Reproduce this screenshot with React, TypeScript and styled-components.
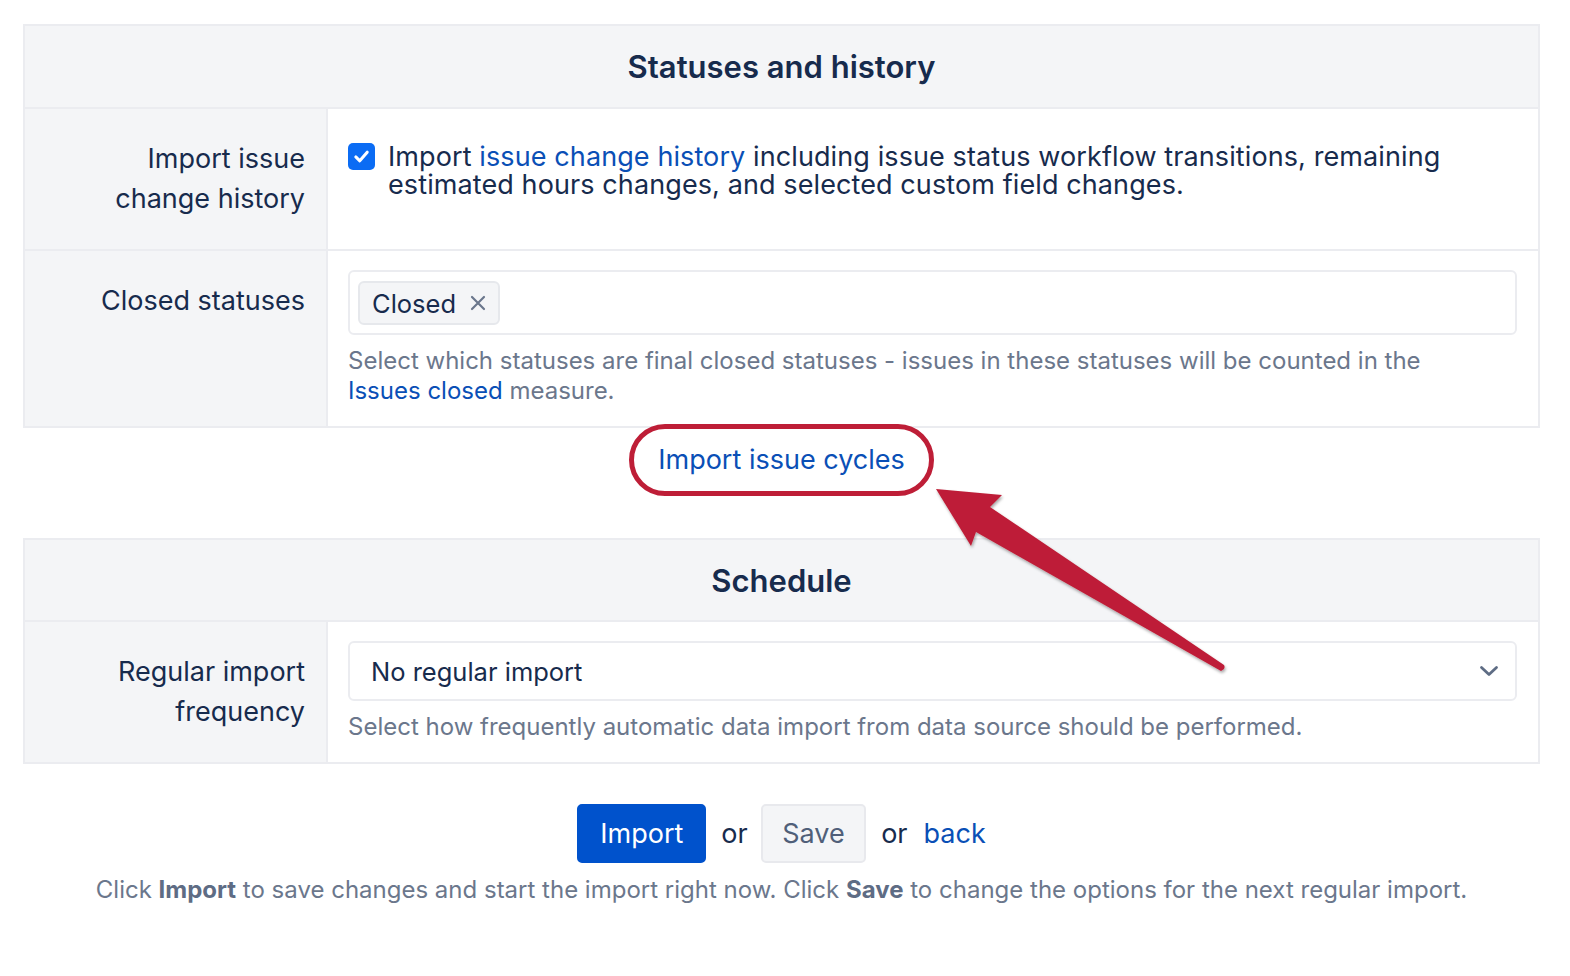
import React from "react";
import styled, { createGlobalStyle } from "styled-components";

const GlobalStyle = createGlobalStyle`
  html, body { margin: 0; padding: 0; background: #ffffff; }
  body {
    font-family: Inter, "Noto Sans", "Liberation Sans", sans-serif;
    color: #172b4d;
    -webkit-font-smoothing: antialiased;
  }
  * { box-sizing: border-box; }
`;

const Page = styled.div`
  position: relative;
  padding: 24px 30px 40px 23px;
  min-height: 976px;
`;

const Section = styled.section<{ $gap?: number }>`
  border: 2px solid #ebecf0;
  margin-top: ${(p) => p.$gap ?? 0}px;
  display: flex;
  flex-direction: column;
`;

const SectionHeader = styled.h2<{ $h?: number }>`
  margin: 0;
  height: ${(p) => p.$h ?? 81}px;
  display: flex;
  align-items: center;
  justify-content: center;
  background: #f4f5f7;
  font-size: 31px;
  font-weight: 600;
  color: #172b4d;
`;

const Row = styled.div`
  display: grid;
  grid-template-columns: 303px 1fr;
  border-top: 2px solid #ebecf0;
`;

const Label = styled.div`
  background: #f4f5f7;
  border-right: 2px solid #ebecf0;
  text-align: right;
  padding: 30px 21px 30px 20px;
  font-size: 27px;
  line-height: 40px;
  color: #172b4d;
`;

const Cell = styled.div<{ $top?: number }>`
  padding: ${(p) => p.$top ?? 19}px 21px 20px 20px;
  background: #ffffff;
`;

const CheckLine = styled.label`
  display: flex;
  align-items: flex-start;
  gap: 13px;
`;

const CheckBox = styled.span`
  flex: 0 0 27px;
  width: 27px;
  height: 27px;
  border-radius: 5px;
  background: #0b6cf4;
  display: flex;
  align-items: center;
  justify-content: center;
`;

const CheckText = styled.span`
  font-size: 27px;
  line-height: 28px;
  letter-spacing: 0.1px;
  color: #172b4d;
`;

const Link = styled.a<{ $nowrap?: boolean }>`
  color: #0a4fb6;
  text-decoration: none;
  white-space: ${(p) => (p.$nowrap ? "nowrap" : "normal")};
`;

const TagInput = styled.div`
  height: 65px;
  border: 2px solid #ebecf0;
  border-radius: 6px;
  padding: 9px 8px;
  display: flex;
  align-items: flex-start;
`;

const Tag = styled.span`
  height: 44px;
  display: inline-flex;
  align-items: center;
  gap: 14px;
  padding: 0 12px;
  background: #f4f5f7;
  border: 2px solid #e6e8ec;
  border-radius: 6px;
  font-size: 25.5px;
  color: #172b4d;
`;

const Help = styled.p`
  margin: 11px 0 0;
  font-size: 24px;
  line-height: 30px;
  color: #6b778c;
`;

const Select = styled.div`
  height: 60px;
  border: 2px solid #ebecf0;
  border-radius: 6px;
  padding: 0 16px 0 21px;
  display: flex;
  align-items: center;
  justify-content: space-between;
  font-size: 25.5px;
  color: #172b4d;
`;

const LinkRow = styled.div`
  display: flex;
  justify-content: center;
  margin-top: -4px;
  position: relative;
`;

const Circled = styled.a`
  display: inline-block;
  border: 5px solid #be1e37;
  border-radius: 40px;
  padding: 16px 24px;
  font-size: 27px;
  line-height: 30px;
  color: #0a4fb6;
  text-decoration: none;
`;

const Actions = styled.div`
  margin-top: 40px;
  display: flex;
  justify-content: center;
  align-items: center;
  font-size: 27px;
  color: #172b4d;
`;

const Button = styled.button<{ $primary?: boolean }>`
  font-family: inherit;
  font-size: 27px;
  line-height: 35px;
  height: 59px;
  padding: 0 ${(p) => (p.$primary ? 21 : 19.5)}px;
  border-radius: 5px;
  cursor: pointer;
  border: 2px solid ${(p) => (p.$primary ? "#0052cc" : "#e8e9ed")};
  background: ${(p) => (p.$primary ? "#0052cc" : "#f4f5f7")};
  color: ${(p) => (p.$primary ? "#ffffff" : "#505f79")};
`;

const Or = styled.span<{ $l: number; $r: number }>`
  margin: 0 ${(p) => p.$r}px 0 ${(p) => p.$l}px;
`;

const Footer = styled.p`
  margin: 12px 0 0;
  text-align: center;
  font-size: 24px;
  line-height: 30px;
  color: #6b778c;
  b {
    color: #5e6c84;
    font-weight: 700;
  }
`;

const Overlay = styled.svg`
  position: absolute;
  left: 0;
  top: 0;
  pointer-events: none;
`;

export default function App() {
  return (
    <>
      <GlobalStyle />
      <Page>
        <Section>
          <SectionHeader>Statuses and history</SectionHeader>
          <Row>
            <Label>
              Import issue
              <br />
              change history
            </Label>
            <Cell $top={34}>
              <CheckLine>
                <CheckBox>
                  <svg width="19" height="19" viewBox="0 0 20 20">
                    <path
                      d="M4 10.5 L8.2 14.5 L16 5.5"
                      fill="none"
                      stroke="#fff"
                      strokeWidth="3.2"
                      strokeLinecap="round"
                      strokeLinejoin="round"
                    />
                  </svg>
                </CheckBox>
                <CheckText>
                  Import <Link href="#">issue change history</Link> including issue status workflow
                  transitions, remaining estimated hours changes, and selected custom field changes.
                </CheckText>
              </CheckLine>
            </Cell>
          </Row>
          <Row>
            <Label>Closed statuses</Label>
            <Cell>
              <TagInput>
                <Tag>
                  Closed
                  <svg width="16" height="16" viewBox="0 0 16 16">
                    <path d="M2 2 L14 14 M14 2 L2 14" stroke="#6b778c" strokeWidth="2.2" strokeLinecap="round" />
                  </svg>
                </Tag>
              </TagInput>
              <Help>
                Select which statuses are final closed statuses - issues in these statuses will be counted in the{" "}
                <Link href="#" $nowrap>
                  Issues closed
                </Link>{" "}
                measure.
              </Help>
            </Cell>
          </Row>
        </Section>

        <LinkRow>
          <Circled href="#">Import issue cycles</Circled>
        </LinkRow>

        <Section $gap={42}>
          <SectionHeader $h={80}>Schedule</SectionHeader>
          <Row>
            <Label>
              Regular import
              <br />
              frequency
            </Label>
            <Cell>
              <Select>
                <span>No regular import</span>
                <svg width="20" height="14" viewBox="0 0 20 14">
                  <path d="M2.5 3.5 L10 10.5 L17.5 3.5" fill="none" stroke="#5e6c84" strokeWidth="2.8" strokeLinecap="round" strokeLinejoin="round" />
                </svg>
              </Select>
              <Help>Select how frequently automatic data import from data source should be performed.</Help>
            </Cell>
          </Row>
        </Section>

        <Actions>
          <Button $primary>Import</Button>
          <Or $l={15} $r={13}>or</Or>
          <Button>Save</Button>
          <Or $l={15} $r={16}>or</Or>
          <Link href="#">back</Link>
        </Actions>
        <Footer>
          Click <b>Import</b> to save changes and start the import right now. Click <b>Save</b> to change the
          options for the next regular import.
        </Footer>

        <Overlay width="1570" height="976" viewBox="0 0 1570 976">
          <defs>
            <filter id="shadow" x="-10%" y="-10%" width="120%" height="120%">
              <feDropShadow dx="1" dy="2" stdDeviation="1.5" floodColor="#000" floodOpacity="0.35" />
            </filter>
          </defs>
          <path
            d="M936 489 L1002 495 L990 507 L1224 665 Q1226 669 1221 671 L976 532 L971 546 Z"
            fill="#be1e37"
            filter="url(#shadow)"
          />
        </Overlay>
      </Page>
    </>
  );
}
